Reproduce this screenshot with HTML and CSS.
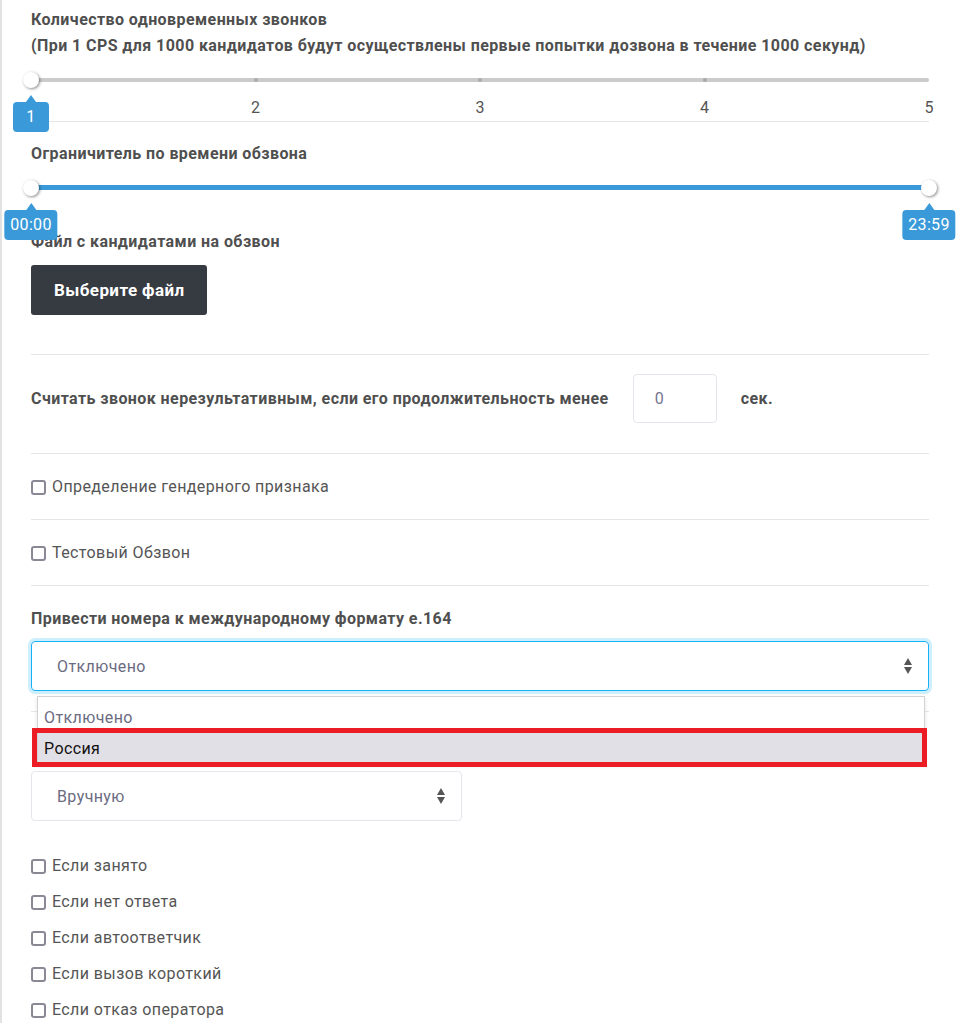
FILE: index.html
```html
<!DOCTYPE html>
<html lang="ru">
<head>
  <meta charset="UTF-8">
  <title>Настройки обзвона</title>
  <link rel="stylesheet" href="styles.css">
</head>
<body>

  <div class="page">

    <!-- CPS -->
    <div class="field first">
      <div class="label">Количество одновременных звонков<br>(При 1 CPS для 1000 кандидатов будут осуществлены первые попытки дозвона в течение 1000 секунд)</div>
      <div class="slider">
        <span class="tick t1"></span>
        <span class="tick t2"></span>
        <span class="tick t3"></span>
        <span class="handle start"><span class="tip">1</span></span>
      </div>
      <div class="scale">
        <span class="under-tip">1</span><span>2</span><span>3</span><span>4</span><span>5</span>
      </div>
    </div>

    <hr>

    <!-- TIME LIMIT -->
    <div class="field">
      <div class="label">Ограничитель по времени обзвона</div>
      <div class="slider range">
        <span class="handle start"><span class="tip">00:00</span></span>
        <span class="handle end"><span class="tip">23:59</span></span>
      </div>
    </div>

    <!-- FILE -->
    <div class="field file">
      <div class="label">Файл с кандидатами на обзвон</div>
      <button class="btn-dark">Выберите файл</button>
    </div>

    <hr>

    <div class="inline-row">
      <span class="label">Считать звонок нерезультативным, если его продолжительность менее</span>
      <input class="num" type="text" value="0">
      <span class="label">сек.</span>
    </div>

    <hr>

    <label class="check-row"><span class="box"></span>Определение гендерного признака</label>

    <hr>

    <label class="check-row"><span class="box"></span>Тестовый Обзвон</label>

    <hr>

    <!-- E.164 -->
    <div class="field format">
      <div class="label">Привести номера к международному формату e.164</div>
      <div class="select-wrap">
        <div class="select focused">
          <span>Отключено</span>
          <svg width="8" height="16" viewBox="0 0 8 16"><polygon points="0,7 4,0 8,7" fill="#555"/><polygon points="0,9 8,9 4,16" fill="#555"/></svg>
        </div>
        <ul class="options">
          <li>Отключено</li>
          <li class="active">Россия</li>
        </ul>
        <div class="mark"></div>
      </div>
    </div>

    <hr class="under">

    <div class="select short">
      <span>Вручную</span>
      <svg width="8" height="16" viewBox="0 0 8 16"><polygon points="0,7 4,0 8,7" fill="#555"/><polygon points="0,9 8,9 4,16" fill="#555"/></svg>
    </div>

    <div class="checks">
      <label class="check"><span class="box"></span>Если занято</label>
      <label class="check"><span class="box"></span>Если нет ответа</label>
      <label class="check"><span class="box"></span>Если автоответчик</label>
      <label class="check"><span class="box"></span>Если вызов короткий</label>
      <label class="check"><span class="box"></span>Если отказ оператора</label>
    </div>

  </div>

</body>
</html>
```

FILE: styles.css
```css
body {
  margin: 0;
  background: #fff;
  font-family: Roboto, 'Liberation Sans', sans-serif;
  color: #555;
}
.page {
  border-left: 2px solid #e2e2e2;
  padding: 7px 29px 40px 29px;
  min-height: 1023px;
  box-sizing: border-box;
}
hr {
  border: none;
  border-top: 1px solid #e6e6e6;
  margin: 0;
}
.label {
  font-size: 16px;
  font-weight: bold;
  line-height: 26px;
  letter-spacing: 0.42px;
  color: #4f4f4f;
}

/* sliders */
.slider {
  position: relative;
  height: 4px;
  margin-top: 19px;
  background: #cbcbcb;
  border-radius: 2px;
}
.slider.range {
  height: 5px;
  margin-top: 18px;
  background: #3a9ad9;
}
.tick {
  position: absolute;
  top: 0;
  width: 4px;
  height: 4px;
  margin-left: -2px;
  border-radius: 50%;
  background: #a9a9a9;
}
.t1 { left: 25%; }
.t2 { left: 50%; }
.t3 { left: 75%; }
.handle {
  position: absolute;
  top: 50%;
  width: 16px;
  height: 16px;
  margin: -8px 0 0 -8px;
  border-radius: 50%;
  background: #fff;
  box-shadow: 1px 1px 3px rgba(0, 0, 0, 0.45);
  z-index: 2;
}
.handle.start { left: 0; }
.handle.end { left: 100%; }
.tip {
  position: absolute;
  top: 30px;
  left: 50%;
  transform: translateX(-50%);
  min-width: 36px;
  height: 30px;
  line-height: 30px;
  padding: 0 6px;
  box-sizing: border-box;
  border-radius: 4px;
  background: #3a9ad9;
  color: #fff;
  font-size: 16px;
  letter-spacing: 0.3px;
  text-align: center;
}
.tip:before {
  content: "";
  position: absolute;
  top: -7px;
  left: 50%;
  margin-left: -5px;
  border-left: 5px solid transparent;
  border-right: 5px solid transparent;
  border-bottom: 7px solid #3a9ad9;
}
.scale {
  display: flex;
  justify-content: space-between;
  margin-top: 16px;
  height: 20px;
  margin-bottom: 3px;
}
.scale span {
  width: 0;
  display: flex;
  justify-content: center;
  font-size: 16px;
  line-height: 20px;
  color: #555;
}
.scale .under-tip { visibility: hidden; }

.field { padding-top: 19px; }
.field.first { padding-top: 0; }
.field.format { padding-top: 20px; }
.field.file { padding-top: 39px; padding-bottom: 39px; }

.btn-dark {
  margin-top: 10px;
  height: 50px;
  padding: 0 22px 0 23px;
  border: none;
  border-radius: 3px;
  background: #363a41;
  color: #fff;
  font-family: Roboto, 'Liberation Sans', sans-serif;
  font-size: 17px;
  font-weight: bold;
  letter-spacing: 0.4px;
}

.inline-row {
  display: flex;
  align-items: center;
  padding: 19px 0 30px;
}
.num {
  width: 84px;
  height: 49px;
  box-sizing: border-box;
  margin: 0 24px 0 24px;
  padding: 0 0 0 21px;
  border: 1px solid #e4e6ec;
  border-radius: 4px;
  font-family: Roboto, 'Liberation Sans', sans-serif;
  font-size: 16px;
  color: #767690;
}

.check-row, .check {
  display: flex;
  align-items: center;
  font-size: 16px;
  line-height: 20px;
  letter-spacing: 0.4px;
  color: #555;
}
.check-row { padding: 23px 0 22px; }
.box {
  width: 15px;
  height: 15px;
  box-sizing: border-box;
  border: 2px solid #8b8795;
  border-radius: 3px;
  margin-right: 6px;
}

/* selects */
.select-wrap {
  position: relative;
  margin-top: 9px;
}
.select {
  display: flex;
  align-items: center;
  justify-content: space-between;
  height: 50px;
  box-sizing: border-box;
  padding: 0 16px 0 25px;
  border: 1px solid #e4e6ec;
  border-radius: 4px;
  font-size: 16px;
  letter-spacing: 0.4px;
  color: #6b6b80;
}
.select.focused {
  border-color: #1ab0f5;
  box-shadow: 0 0 0 3px rgba(26, 176, 245, 0.22);
}
.select.short {
  width: 431px;
  margin-top: 59px;
}
hr.under { margin-top: 20px; }
.options {
  position: absolute;
  top: 55px;
  left: 6px;
  right: 4px;
  margin: 0;
  padding: 5px 0 0;
  list-style: none;
  background: #fff;
  border: 1px solid #d3d3d3;
  border-bottom: none;
  box-shadow: 0 2px 4px rgba(0, 0, 0, 0.12);
  z-index: 3;
}
.options li {
  height: 31px;
  line-height: 31px;
  padding-left: 6px;
  font-size: 16px;
  letter-spacing: 0.4px;
  color: #6b6b80;
}
.options li.active {
  background: #e1e0e6;
  color: #111;
}
.mark {
  position: absolute;
  top: 87px;
  left: 1px;
  right: 2px;
  height: 39px;
  box-sizing: border-box;
  border: 5px solid #ec1c24;
  z-index: 4;
}

.checks {
  display: flex;
  flex-direction: column;
  gap: 16px;
  margin-top: 35px;
}
```
